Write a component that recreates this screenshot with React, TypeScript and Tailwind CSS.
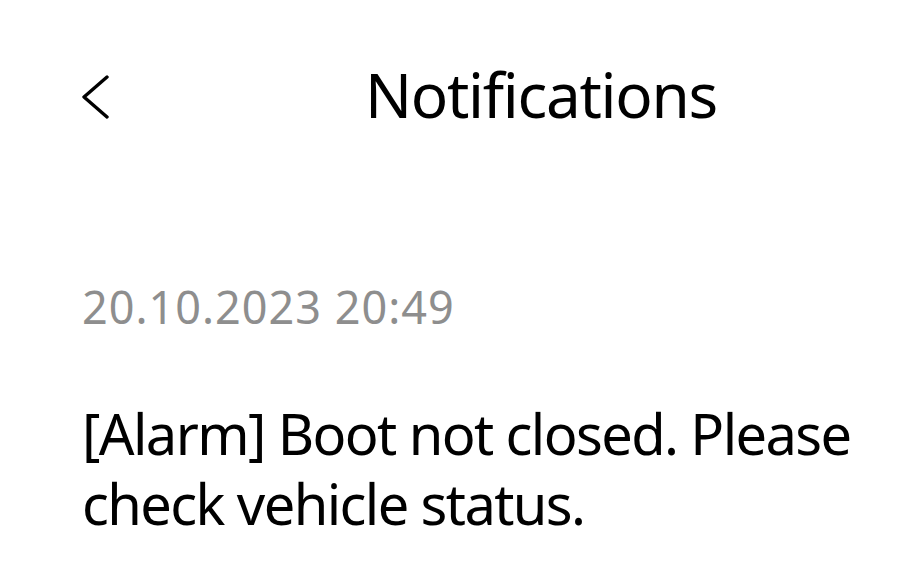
export default function App() {
  return (
    <div className="flex h-[584px] w-[902px] flex-col bg-white text-black" style={{ fontFamily: '"Noto Sans", sans-serif' }}>
      <header className="flex items-start pt-[63px]">
        <button className="ml-[80px] mt-[12px] h-[44px] w-[32px]">
          <svg viewBox="0 0 32 44" className="h-[44px] w-[32px]" fill="none" stroke="black" strokeWidth="3.4" strokeLinecap="round" strokeLinejoin="round">
            <path d="M27 2 L4 22 L27 42" />
          </svg>
        </button>
        <h1 className="ml-[253px] text-[62px] leading-[62px] tracking-[-1.3px]">Notifications</h1>
      </header>
      <div className="px-[82px]">
        <p className="mt-[159px] text-[45px] leading-[45px] tracking-[1px] text-[#8e8e8e]">20.10.2023 20:49</p>
        <p className="mt-[69px] whitespace-nowrap text-[56px] leading-[70px] tracking-[-1.6px]">
          [Alarm] Boot not closed. Please
          <br />
          check vehicle status.
        </p>
      </div>
    </div>
  );
}
